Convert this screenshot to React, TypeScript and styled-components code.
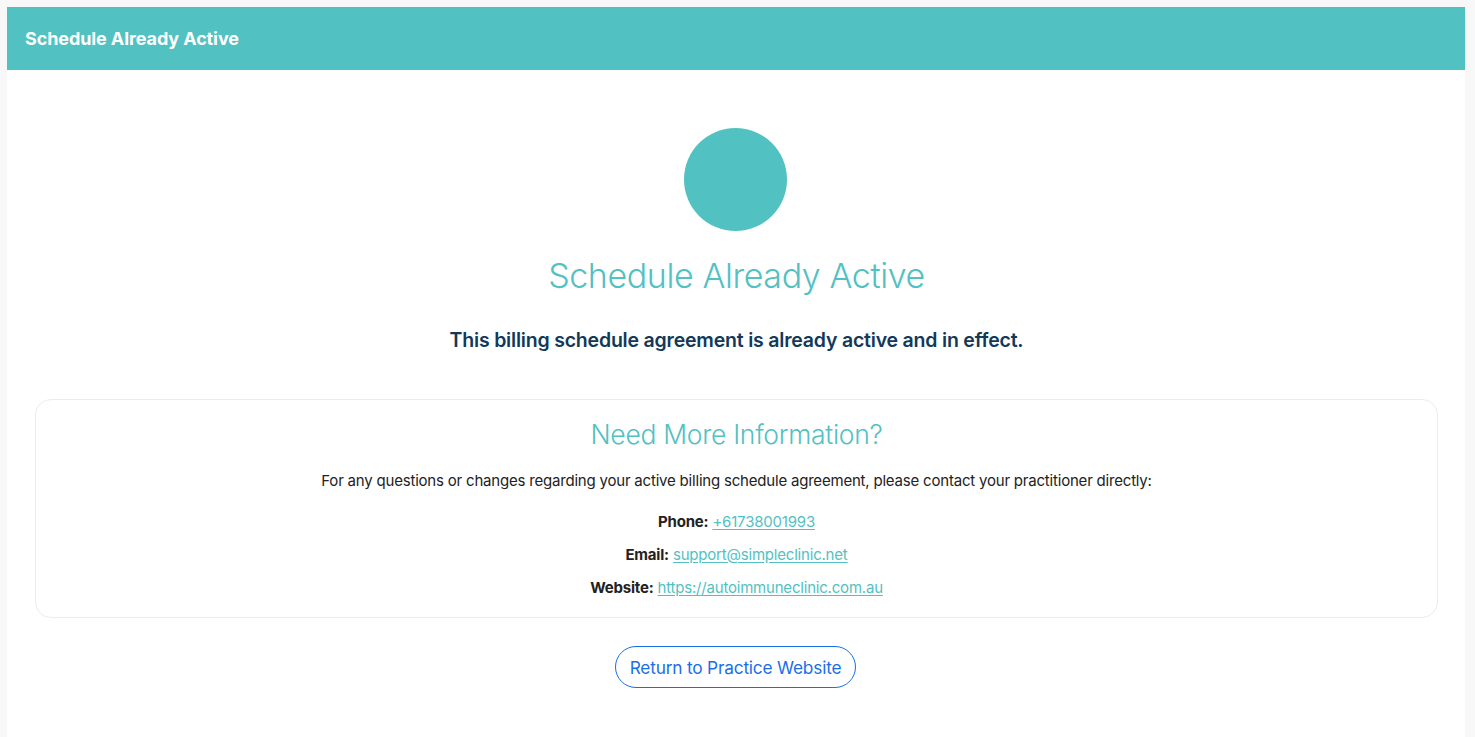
import styled, { createGlobalStyle } from "styled-components";

const GlobalStyle = createGlobalStyle`
  html, body {
    margin: 0;
    padding: 0;
    background: #f8f8f8;
  }
  body {
    font-family: "Inter", "Liberation Sans", sans-serif;
    color: #222;
  }
`;

const teal = "#52c1c2";

const Card = styled.div`
  margin: 7px 10px 0 7px;
  background: #fff;
  min-height: 760px;
`;

const Header = styled.div`
  height: 63px;
  background: ${teal};
  display: flex;
  align-items: center;
  padding: 0 18px;
  h1 {
    margin: 0;
    color: #fff;
    font-size: 18px;
    font-weight: 700;
    letter-spacing: -0.1px;
  }
`;

const Body = styled.div`
  display: flex;
  flex-direction: column;
  align-items: center;
  padding: 58px 27px 40px 28px;
`;

const Circle = styled.div`
  width: 103px;
  height: 103px;
  border-radius: 50%;
  background: ${teal};
  margin-right: 2px;
`;

const Title = styled.h2`
  margin: 23px 0 0;
  font-size: 34px;
  font-weight: 300;
  color: ${teal};
  letter-spacing: -0.4px;
  line-height: 44px;
`;

const Lead = styled.p`
  margin: 30px 0 0;
  font-size: 19.5px;
  font-weight: 600;
  color: #12395a;
  letter-spacing: -0.2px;
  line-height: 24px;
`;

const InfoBox = styled.div`
  align-self: stretch;
  margin-top: 47px;
  border: 1px solid #e8eeee;
  border-radius: 16px;
  padding: 17px 20px 17px;
  display: flex;
  flex-direction: column;
  align-items: center;
`;

const InfoTitle = styled.h3`
  margin: 0;
  font-size: 26.5px;
  font-weight: 300;
  color: ${teal};
  letter-spacing: -0.3px;
  line-height: 34px;
`;

const InfoText = styled.p`
  margin: 18px 0 8px;
  font-size: 15px;
  color: #222;
  letter-spacing: -0.2px;
  line-height: 24px;
`;

const ContactRow = styled.p`
  margin: 9px 0 0;
  font-size: 15px;
  line-height: 24px;
  letter-spacing: -0.2px;
  strong {
    font-weight: 700;
    color: #222;
  }
  a {
    color: ${teal};
    text-decoration: underline;
    text-underline-offset: 2px;
  }
`;

const ReturnButton = styled.a`
  margin-top: 28px;
  height: 42px;
  box-sizing: border-box;
  width: 241px;
  display: inline-flex;
  align-items: center;
  justify-content: center;
  border: 1px solid #1a6fe8;
  border-radius: 22px;
  color: #1a6fe8;
  font-size: 17.3px;
  letter-spacing: -0.2px;
  text-decoration: none;
  margin-right: 2px;
`;

const contacts = [
  { label: "Phone:", text: "+61738001993", href: "tel:+61738001993" },
  { label: "Email:", text: "support@simpleclinic.net", href: "mailto:support@simpleclinic.net" },
  { label: "Website:", text: "https://autoimmuneclinic.com.au", href: "https://autoimmuneclinic.com.au" },
];

export default function App() {
  return (
    <>
      <GlobalStyle />
      <Card>
        <Header>
          <h1>Schedule Already Active</h1>
        </Header>
        <Body>
          <Circle />
          <Title>Schedule Already Active</Title>
          <Lead>This billing schedule agreement is already active and in effect.</Lead>
          <InfoBox>
            <InfoTitle>Need More Information?</InfoTitle>
            <InfoText>
              For any questions or changes regarding your active billing schedule agreement, please contact your practitioner directly:
            </InfoText>
            {contacts.map((c) => (
              <ContactRow key={c.label}>
                <strong>{c.label}</strong> <a href={c.href}>{c.text}</a>
              </ContactRow>
            ))}
          </InfoBox>
          <ReturnButton href="#">Return to Practice Website</ReturnButton>
        </Body>
      </Card>
    </>
  );
}
